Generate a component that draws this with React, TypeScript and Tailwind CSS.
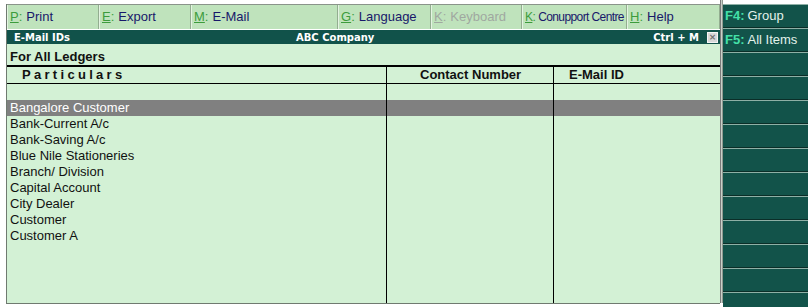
import React from "react";

const topButtons: { k: string; label: string; w: string; dim?: boolean; small?: boolean }[] = [
  { k: "P", label: "Print", w: "w-[92px]" },
  { k: "E", label: "Export", w: "w-[92px]" },
  { k: "M", label: "E-Mail", w: "w-[147px]" },
  { k: "G", label: "Language", w: "w-[93px]" },
  { k: "K", label: "Keyboard", w: "w-[91px]", dim: true },
  { k: "K", label: "Conupport Centre", w: "w-[105px]", small: true },
  { k: "H", label: "Help", w: "w-[93px]" },
];

const rows = [
  "Bank-Current A/c",
  "Bank-Saving A/c",
  "Blue Nile Stationeries",
  "Branch/ Division",
  "Capital Account",
  "City Dealer",
  "Customer",
  "Customer A",
];

export default function App() {
  return (
    <div className="w-[808px] h-[307px] bg-white flex font-['Liberation_Sans',Arial,sans-serif] overflow-hidden">
      {/* Left part */}
      <div className="ml-[6px] mt-[4px] w-[714px] h-[300px] flex flex-col border-l border-b border-[#6f7a70]">
        {/* top bar */}
        <div className="h-[25px] flex border-t border-[#8a948a] bg-[#bfe3bc]">
          {topButtons.map((b, i) => (
            <div
              key={i}
              className={`${b.w} h-full flex items-center pl-[3px] border-r border-[#93ad90] shadow-[inset_1px_0_0_#e4f4e2] ${
                b.small ? "text-[12px] tracking-[-0.6px]" : "text-[13px]"
              } whitespace-nowrap overflow-hidden`}
            >
              <span className={b.dim ? "text-[#a0a8a0] underline" : "text-[#3c9c3c] underline"}>{b.k}</span>
              <span className={b.dim ? "text-[#a0a8a0]" : "text-[#3c9c3c]"}>:</span>
              <span className={`${b.small ? "ml-[3px]" : "ml-[4px]"} ${b.dim ? "text-[#a0a8a0]" : "text-[#18186a]"}`}>{b.label}</span>
            </div>
          ))}
        </div>
        {/* title bar */}
        <div className="h-[14px] bg-[#11524a] flex items-center text-white font-bold text-[10px] font-['DejaVu_Sans',Verdana,sans-serif] mt-[1px]">
          <div className="w-[289px] pl-[7px]">E-Mail IDs</div>
          <div className="flex-1">ABC Company</div>
          <div className="pr-[8px]">Ctrl + M</div>
          <div className="w-[11px] h-[11px] bg-[#d8d8d8] border border-[#f4f4f4] mr-[2px] flex items-center justify-center text-[#707070] text-[9px] leading-none">
            ×
          </div>
        </div>
        {/* main */}
        <div className="flex-1 bg-[#d3f1d5] flex flex-col">
          <div className="h-[20px] pl-[3px] pt-[6px] text-[13px] font-bold text-[#111] leading-[14px]">For All Ledgers</div>
          <div className="h-[2px] bg-black mt-[1px]" />
          <div className="flex-1 flex">
            {/* particulars column */}
            <div className="w-[380px] flex flex-col border-r border-black">
              <div className="h-[17px] border-b border-black pl-[15px] text-[13px] font-bold tracking-[3.3px] leading-[16px] text-[#111]">
                Particulars
              </div>
              <div className="h-[16px]" />
              <div className="h-[16px] bg-[#808080] text-white text-[13px] leading-[15px] pl-[3px]">Bangalore Customer</div>
              {rows.map((r) => (
                <div key={r} className="h-[16px] text-[13px] leading-[15px] pl-[3px] text-[#111]">
                  {r}
                </div>
              ))}
            </div>
            {/* contact column */}
            <div className="w-[167px] flex flex-col border-r border-black">
              <div className="h-[17px] border-b border-black pl-[33px] text-[13px] font-bold leading-[16px] text-[#111]">
                Contact Number
              </div>
              <div className="h-[16px]" />
              <div className="h-[16px] bg-[#808080]" />
            </div>
            {/* email column */}
            <div className="flex-1 flex flex-col">
              <div className="h-[17px] border-b border-black pl-[15px] text-[13px] font-bold leading-[16px] text-[#111]">
                E-Mail ID
              </div>
              <div className="h-[16px]" />
              <div className="h-[16px] bg-[#808080]" />
            </div>
          </div>
        </div>
      </div>
      {/* right panel */}
      <div className="w-[88px] h-[307px] flex">
        <div className="w-[3px] h-[303px] bg-[#c8d0c8] border-l border-[#7a7a7a] border-r border-r-[#909890]" />
        <div className="flex-1 flex flex-col pt-[4px]">
          {["F4:|Group", "F5:|All Items", "", "", "", "", "", "", "", "", "", "", ""].map((t, i) => {
            const [k, l] = t.split("|");
            return (
              <div
                key={i}
                className="h-[24px] shrink-0 bg-[#12534a] border-t border-[#8eb0a6] border-b border-b-[#0a2e28] flex items-center pl-[2px] text-[13px] whitespace-nowrap"
              >
                {t && (
                  <>
                    <span className="text-[#44e0a8] font-bold">{k}</span>
                    <span className="ml-[3px] text-[#e2f2ea]">{l}</span>
                  </>
                )}
              </div>
            );
          })}
        </div>
      </div>
    </div>
  );
}
